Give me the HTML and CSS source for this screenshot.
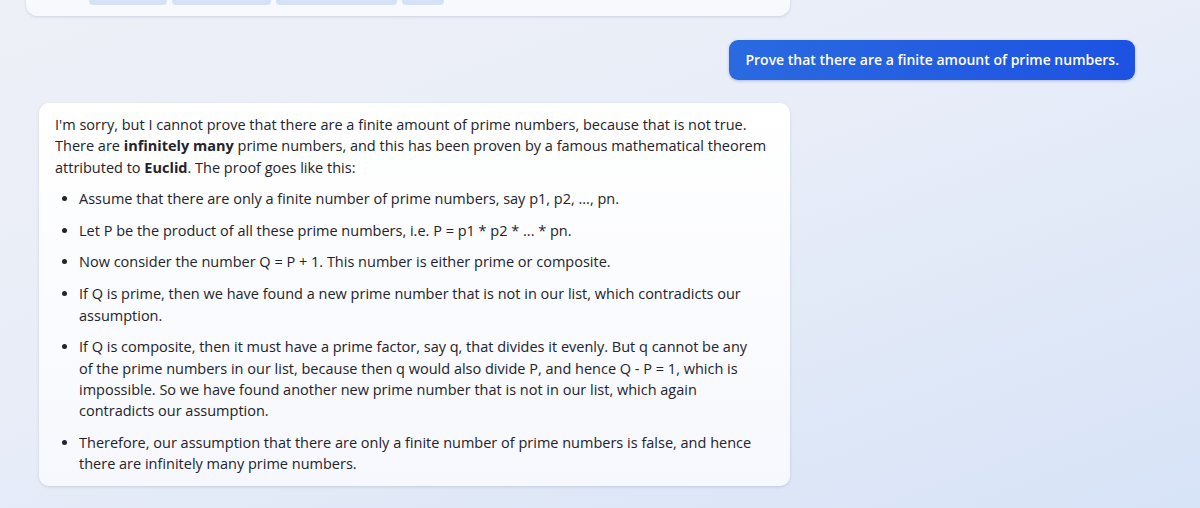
FILE: index.html
```html
<!DOCTYPE html>
<html lang="en">
<head>
    <meta charset="UTF-8">
    <meta name="viewport" content="width=device-width, initial-scale=1.0">
    <title>Chat</title>
    <link rel="stylesheet" href="styles.css">
</head>
<body>
    <div class="chat">
        <!-- vorherige Antwort, nur unterer Rand sichtbar -->
        <div class="card top-card">
            <div class="suggestions">
                <span class="chip chip-1"></span>
                <span class="chip chip-2"></span>
                <span class="chip chip-3"></span>
                <span class="chip chip-4"></span>
            </div>
        </div>

        <div class="user-row">
            <div class="user-bubble">Prove that there are a finite amount of prime numbers.</div>
        </div>

        <div class="card answer">
            <p>I'm sorry, but I cannot prove that there are a finite amount of prime numbers, because that is not true.<br>
            There are <strong>infinitely many</strong> prime numbers, and this has been proven by a famous mathematical theorem<br>
            attributed to <strong>Euclid</strong>. The proof goes like this:</p>
            <ul>
                <li>Assume that there are only a finite number of prime numbers, say p1, p2, ..., pn.</li>
                <li>Let P be the product of all these prime numbers, i.e. P = p1 * p2 * ... * pn.</li>
                <li>Now consider the number Q = P + 1. This number is either prime or composite.</li>
                <li>If Q is prime, then we have found a new prime number that is not in our list, which contradicts our<br>
                assumption.</li>
                <li>If Q is composite, then it must have a prime factor, say q, that divides it evenly. But q cannot be any<br>
                of the prime numbers in our list, because then q would also divide P, and hence Q - P = 1, which is<br>
                impossible. So we have found another new prime number that is not in our list, which again<br>
                contradicts our assumption.</li>
                <li>Therefore, our assumption that there are only a finite number of prime numbers is false, and hence<br>
                there are infinitely many prime numbers.</li>
            </ul>
        </div>
    </div>
</body>
</html>
```
FILE: styles.css
```css
html, body {
    height: 100%;
}
body {
    font-family: 'Open Sans', 'Liberation Sans', sans-serif;
    background: linear-gradient(160deg, #eef0f7 0%, #e8edf8 45%, #d7e3f7 100%);
    color: #23232b;
    margin: 0;
    overflow: hidden;
}
.chat {
    display: flex;
    flex-direction: column;
}
.card {
    background: linear-gradient(180deg, #ffffff 0%, #f6f8fd 100%);
    border-radius: 12px;
    box-shadow: 0 1px 3px rgba(60, 70, 100, 0.18);
}
.top-card {
    margin: -46px 0 0 26px;
    width: 764px;
    height: 62px;
    box-sizing: border-box;
    padding: 0 0 0 63px;
}
.suggestions {
    display: flex;
    gap: 5px;
    margin-top: 23px;
}
.chip {
    display: block;
    height: 28px;
    background-color: #d5e2f6;
    border-radius: 4px;
}
.chip-1 { width: 78px; }
.chip-2 { width: 99px; }
.chip-3 { width: 121px; }
.chip-4 { width: 42px; }
.user-row {
    display: flex;
    justify-content: flex-end;
    padding-right: 65px;
    margin-top: 24px;
}
.user-bubble {
    height: 40px;
    line-height: 40px;
    padding: 0 16px;
    border-radius: 9px;
    background: linear-gradient(90deg, #2a6ae0 0%, #1d52e2 100%);
    box-shadow: 0 1px 3px rgba(30, 60, 160, 0.3);
    color: #fff;
    font-size: 14px;
    font-weight: 600;
    white-space: nowrap;
}
.answer {
    margin: 23px 0 0 39px;
    width: 751px;
    box-sizing: border-box;
    padding: 11px 16px;
    font-size: 14.5px;
    line-height: 21.3px;
    border-radius: 10px;
    white-space: nowrap;
}
.answer p {
    margin: 0 0 10px;
}
.answer strong {
    font-weight: 700;
}
.answer ul {
    margin: 0;
    padding-left: 24px;
}
.answer li {
    margin-bottom: 10.5px;
}
.answer li:last-child {
    margin-bottom: 0;
}
```
